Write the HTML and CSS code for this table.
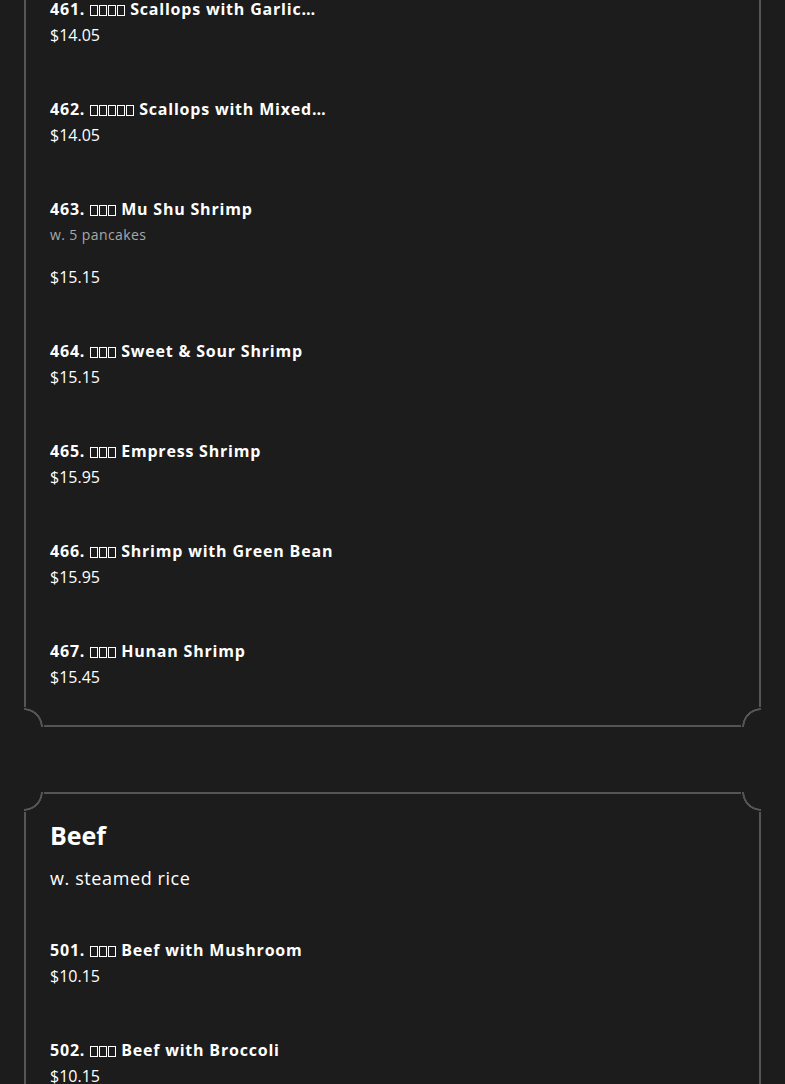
FILE: index.html
```html
<!DOCTYPE html>
<html>
<head>
<meta charset="utf-8">
<link rel="stylesheet" href="styles.css">
</head>
<body>
<div class="page">
  <section class="card card-first">
    <div class="item">
      <div class="title">461. <span class="tofu"><i></i><i></i><i></i><i></i></span> Scallops with Garlic…</div>
      <div class="price">$14.05</div>
    </div>
    <div class="item">
      <div class="title">462. <span class="tofu"><i></i><i></i><i></i><i></i><i></i></span> Scallops with Mixed…</div>
      <div class="price">$14.05</div>
    </div>
    <div class="item">
      <div class="title">463. <span class="tofu"><i></i><i></i><i></i></span> Mu Shu Shrimp</div>
      <div class="desc">w. 5 pancakes</div>
      <div class="price">$15.15</div>
    </div>
    <div class="item">
      <div class="title">464. <span class="tofu"><i></i><i></i><i></i></span> Sweet &amp; Sour Shrimp</div>
      <div class="price">$15.15</div>
    </div>
    <div class="item">
      <div class="title">465. <span class="tofu"><i></i><i></i><i></i></span> Empress Shrimp</div>
      <div class="price">$15.95</div>
    </div>
    <div class="item">
      <div class="title">466. <span class="tofu"><i></i><i></i><i></i></span> Shrimp with Green Bean</div>
      <div class="price">$15.95</div>
    </div>
    <div class="item">
      <div class="title">467. <span class="tofu"><i></i><i></i><i></i></span> Hunan Shrimp</div>
      <div class="price">$15.45</div>
    </div>
    <span class="corner bl"></span>
    <span class="corner br"></span>
  </section>

  <section class="card">
    <h2 class="cat">Beef</h2>
    <div class="cat-desc">w. steamed rice</div>
    <div class="item">
      <div class="title">501. <span class="tofu"><i></i><i></i><i></i></span> Beef with Mushroom</div>
      <div class="price">$10.15</div>
    </div>
    <div class="item">
      <div class="title">502. <span class="tofu"><i></i><i></i><i></i></span> Beef with Broccoli</div>
      <div class="price">$10.15</div>
    </div>
    <span class="corner tl"></span>
    <span class="corner tr"></span>
    <span class="corner bl"></span>
    <span class="corner br"></span>
  </section>
</div>
</body>
</html>
```

FILE: styles.css
```css
html, body {
  margin: 0;
  padding: 0;
  background: #1c1c1c;
  color: #ffffff;
  font-family: "Open Sans", "Liberation Sans", sans-serif;
}
body {
  height: 1084px;
  overflow: hidden;
}
.page {
  padding: 0 24px;
  display: flex;
  flex-direction: column;
  gap: 65px;
}
.card {
  position: relative;
  border: 2px solid #555555;
  padding: 24px 24px 35px;
  display: flex;
  flex-direction: column;
}
.card-first {
  margin-top: -30px;
}
.item {
  display: flex;
  flex-direction: column;
  margin-bottom: 48px;
}
.item:last-of-type {
  margin-bottom: 0;
}
.title {
  font-size: 16px;
  font-weight: 700;
  line-height: 26px;
  letter-spacing: 0.8px;
  white-space: nowrap;
}
.price {
  font-size: 16px;
  line-height: 26px;
}
.desc {
  font-size: 14px;
  line-height: 26px;
  letter-spacing: 0.4px;
  color: #a8a8a8;
  margin-bottom: 16px;
}
.tofu {
  display: inline-flex;
  gap: 1px;
  vertical-align: -1px;
}
.tofu i {
  display: block;
  width: 6px;
  height: 9px;
  border: 1px solid #ffffff;
}
.cat {
  margin: 0;
  padding-top: 2px;
  font-size: 25px;
  line-height: 30px;
  font-weight: 700;
}
.cat-desc {
  font-size: 18px;
  line-height: 26px;
  letter-spacing: 0.6px;
  margin: 15px 0 46px;
}
.corner {
  position: absolute;
  width: 20px;
  height: 20px;
}
.corner.tl {
  top: -2px;
  left: -2px;
  background: radial-gradient(circle at 0 0, #1c1c1c 16.5px, #555555 17px, #555555 18.5px, #1c1c1c 19px);
}
.corner.tr {
  top: -2px;
  right: -2px;
  background: radial-gradient(circle at 100% 0, #1c1c1c 16.5px, #555555 17px, #555555 18.5px, #1c1c1c 19px);
}
.corner.bl {
  bottom: -2px;
  left: -2px;
  background: radial-gradient(circle at 0 100%, #1c1c1c 16.5px, #555555 17px, #555555 18.5px, #1c1c1c 19px);
}
.corner.br {
  bottom: -2px;
  right: -2px;
  background: radial-gradient(circle at 100% 100%, #1c1c1c 16.5px, #555555 17px, #555555 18.5px, #1c1c1c 19px);
}
```
